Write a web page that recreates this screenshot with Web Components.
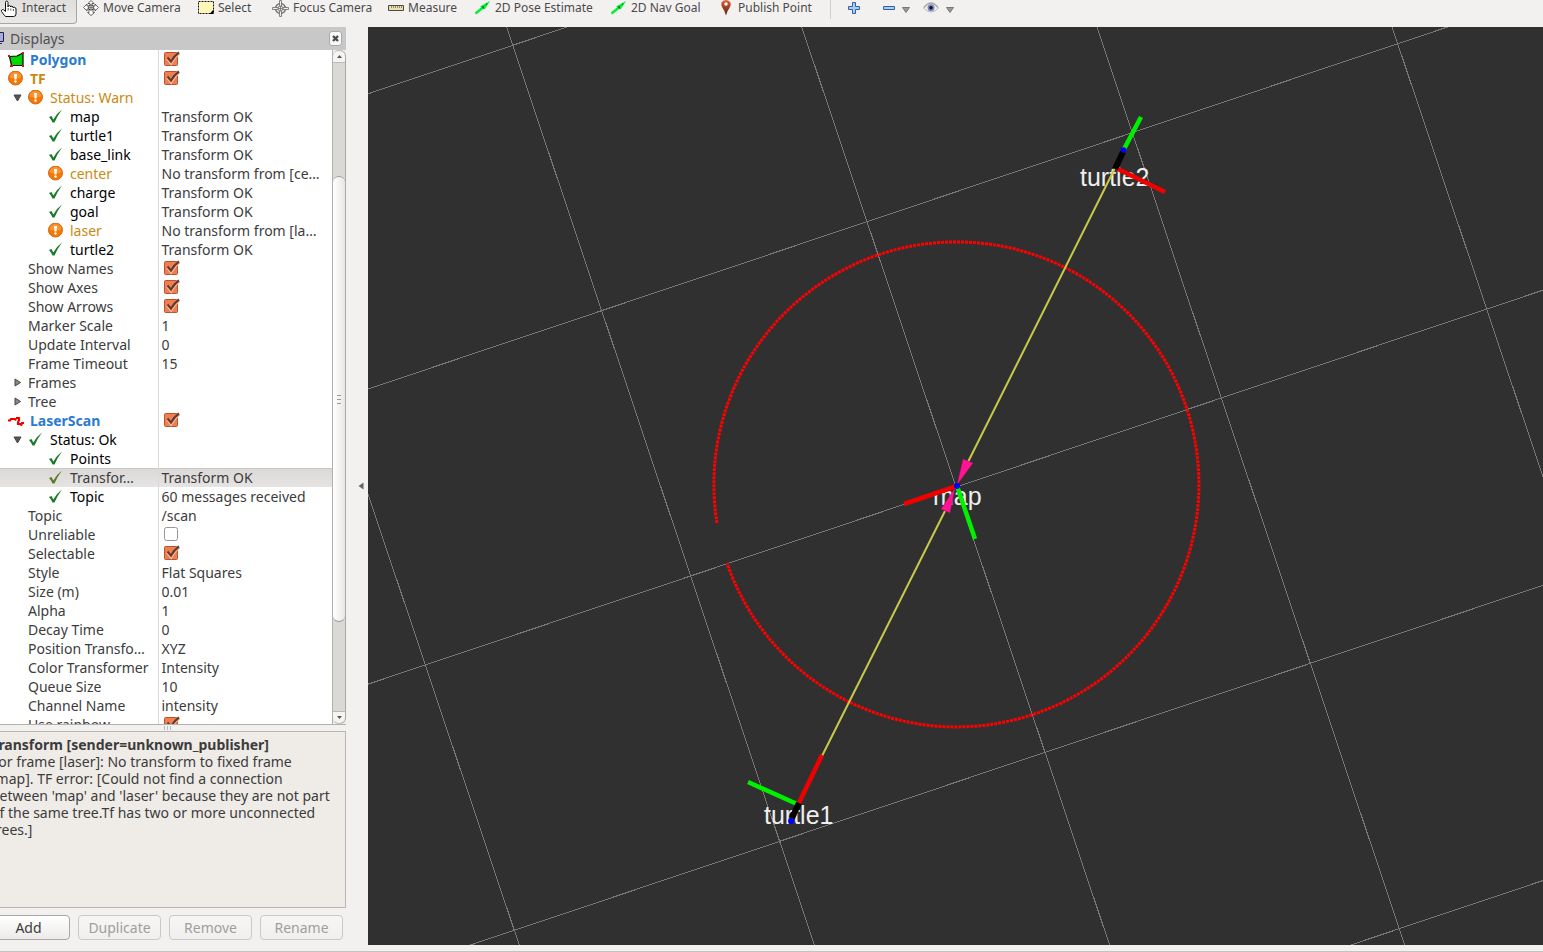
<!DOCTYPE html>
<html lang="en">
<head>
<meta charset="utf-8">
<title>RViz</title>
<style>
html,body{margin:0;height:100%;overflow:hidden;background:#f2f1f0;color:#3c3c3c;font:14px/19px "Noto Sans","Open Sans",sans-serif}
</style>
</head>
<body>
<rviz-app></rviz-app>
<script>
const define = (name, html) => customElements.define(name, class extends HTMLElement {
  connectedCallback() {
    if (this.shadowRoot) return;
    const t = document.createElement('template');
    t.innerHTML = typeof html === 'function' ? html(this) : html;
    this.attachShadow({mode: 'open'}).append(t.content.cloneNode(true));
  }
});

const svg = (w, h, body) => `<svg width="${w}" height="${h}" viewBox="0 0 ${w} ${h}" aria-hidden="true">${body}</svg>`;
const ICONS = {
  hand: svg(18, 18, '<path d="M5.500 10V3.500Q5.500 2 6.700 2T8 3.500V8Q8 6.500 9.300 6.500T10.600 8Q10.800 7 12 7.200T13.200 9Q13.500 8 14.700 8.300T16 10V15Q16 17.500 13.500 17.500H6Q5 17.500 4.500 16.500L1.500 12.500Q1 11 2.300 10.600T5.500 12.500Z" fill="#fff" stroke="#111"/><path d="M8.200 9v2.500M10.800 9.500v2M13.400 10v2" stroke="#333" stroke-width=".8"/>'),
  move: svg(16, 16, '<path d="M8 .5L11 3.500H9V6H12V4L15.500 7.500 12 11V9H10V12.500H11.500L8 15.500 4.500 12.500H6V9H4V11L.5 7.500 4 4V6H7V3.500H5Z" fill="#fff" stroke="#555" stroke-width=".9"/><circle cx="8" cy="7.500" r="2.600" fill="#ddd" stroke="#444"/><path d="M8 5v5M5.500 7.500h5" stroke="#555" stroke-width=".7"/>'),
  select: svg(16, 16, '<path d="M.5 1.500H15.500V13.500H.5Z" fill="#fff6ba" stroke="#111" stroke-dasharray="2 1"/><path d="M15.500 9.500V14H11.500Z" fill="#000"/>'),
  focus: svg(17, 17, '<g fill="#eee" stroke="#777" stroke-width=".9"><circle cx="8.500" cy="8.500" r="5" fill="none" stroke-width="1.500"/><path d="M7.500 .5H9.500V7.500H16.500V9.500H9.500V16.500H7.500V9.500H.5V7.500H7.500Z"/><circle cx="8.500" cy="8.500" r="2.500"/><path d="M8.500 6v5M6 8.500h5"/></g>'),
  measure: svg(16, 16, '<path d="M.5 5.500H15.500V10.500H.5Z" fill="#eadfae" stroke="#4e4a4a"/><path d="M3.500 6v2M5.500 6v2M7.500 6v2M9.500 6v2M11.500 6v2M13.500 6v2" stroke="#807750" stroke-width=".8"/>'),
  arrow: svg(16, 16, '<path d="M.5 13.500L8 7.500" stroke="#00f030" stroke-width="2.400"/><path d="M5 6.500L15 1 9.500 9.500Z" fill="#00f030"/><path d="M7 7h2M8 8h1M11 4h1" stroke="#064020"/>'),
  pin: svg(16, 16, '<defs><linearGradient id="p" x2="0" y2="1"><stop stop-color="#e85c38"/><stop offset="1" stop-color="#4e2410"/></linearGradient></defs><path d="M8 15.500Q7 11 4.500 8Q2.500 5 3.500 2.500Q5 0 8 0T12.500 2.500Q13.500 5 11.500 8Q9 11 8 15.500Z" fill="url(#p)"/><circle cx="8" cy="4" r="1.700" fill="#fff"/>'),
  plus: svg(12, 12, '<path d="M4.500 .5H7.500V4.500H11.500V7.500H7.500V11.500H4.500V7.500H.5V4.500H4.500Z" fill="#a9cbee" stroke="#2e63a8"/>'),
  minus: svg(12, 12, '<path d="M.5 4.500H11.500V7.500H.5Z" fill="#a9cbee" stroke="#2e63a8"/>'),
  eye: svg(16, 12, '<path d="M.5 6Q8 -3.500 15.500 6Q8 14 .5 6Z" fill="#f0f0f0" stroke="#bbb"/><path d="M1 5.500Q8 -3.500 15 5.500" fill="none" stroke="#aaa" stroke-width="1.500"/><circle cx="8" cy="5.800" r="3.500" fill="#7b88c0"/><circle cx="8" cy="5.800" r="1.700" fill="#101018"/>'),
  drop: svg(8, 10, '<path d="M.5 4.500H7.500L4 9.500Z" fill="#999" stroke="#777"/>'),
  warn: svg(16, 16, '<circle cx="7.500" cy="7" r="7" fill="#f57900" stroke="#d2691e"/><path d="M1.500 6.500Q2.500 1 7.500 1T13.500 6.500Q8 8.500 1.500 6.500Z" fill="#ffa64d" opacity=".6"/><path d="M6 3H9L8.500 8.500H6.500Z" fill="#fff"/><circle cx="7.500" cy="10.500" r="1.200" fill="#fff"/>'),
  check: svg(16, 16, '<path d="M1 8L3.500 7 5.300 10.500Q8.500 4.500 14 .5Q9.500 6.500 6.500 13.500H4.500Q3.200 10.500 1 8Z" fill="currentColor"/>'),
  polygon: svg(16, 16, '<path d="M1.500 4.500L9 4 15 1V13.500H3.500Z" fill="#00d800" stroke="#000" stroke-width="1.200"/><path d="M0 3h2v2H0zM14 0h2v2h-2zM14 13h2v2h-2zM2 13h3v2H2z" fill="#e01010"/>'),
  laser: svg(16, 16, '<path d="M0 7.500H2L3 6H7L8 7.500M8 5H11V7L10 9.500V11H13V12.500L14 10H16" fill="none" stroke="#f00000" stroke-width="2.200"/>'),
  open: svg(9, 8, '<path d="M1 1H8L4.500 7Z" fill="#555" stroke="#444"/>'),
  closed: svg(8, 9, '<path d="M1 1V8L6.500 4.500Z" fill="#888" stroke="#444"/>')
};

define('tool-button', el => `<style>
:host{display:block;min-width:0}
button{display:flex;align-items:center;gap:4px;height:32px;margin:0;padding:0;border:0;background:none;color:#4a4a4a;font:12px/16px "Noto Sans","Open Sans",sans-serif;white-space:nowrap}
svg{display:block;flex:none}
:host([menu]) button{gap:7px}
:host([active]) button{box-sizing:border-box;width:77px;border:1px solid #a7a5a2;border-left:0;border-radius:0 0 4px 0;background:linear-gradient(#dedcda,#e9e8e6)}
</style><button type="button" ${el.getAttribute('label') ? `aria-label="${el.getAttribute('label')}"` : ''}>${ICONS[el.getAttribute('icon')]}${el.hasAttribute('menu') ? ICONS.drop : ''}<slot></slot></button>`);

define('tool-bar', `<style>
:host{display:block;height:27px;overflow:hidden;background:#f2f1f0}
nav{display:grid;grid-template-columns:83px 115px 74px 116px 87px 136px 107px 112px 18px 35px 40px 40px;margin-top:-8px;align-items:start}
.sep{width:1px;height:27px;background:#d0cecc}
</style><nav aria-label="Tools">
<tool-button icon="hand" active>Interact</tool-button>
<tool-button icon="move">Move Camera</tool-button>
<tool-button icon="select">Select</tool-button>
<tool-button icon="focus">Focus Camera</tool-button>
<tool-button icon="measure">Measure</tool-button>
<tool-button icon="arrow">2D Pose Estimate</tool-button>
<tool-button icon="arrow">2D Nav Goal</tool-button>
<tool-button icon="pin">Publish Point</tool-button>
<div class="sep"></div>
<tool-button icon="plus" label="Add tool"></tool-button>
<tool-button icon="minus" label="Remove tool" menu></tool-button>
<tool-button icon="eye" label="View" menu></tool-button>
</nav>`);

// [depth, expander, icon, name, value, style]; true/false values are tick boxes
const OK = 'Transform OK';
const ROWS = [
  [0,'','polygon','Polygon',true,'display'],
  [0,'','warn','TF',true,'display warn'],
  [1,'open','warn','Status: Warn','','warn'],
  [2,'','check','map',OK,'status'],
  [2,'','check','turtle1',OK,'status'],
  [2,'','check','base_link',OK,'status'],
  [2,'','warn','center','No transform from [ce…','warn'],
  [2,'','check','charge',OK,'status'],
  [2,'','check','goal',OK,'status'],
  [2,'','warn','laser','No transform from [la…','warn'],
  [2,'','check','turtle2',OK,'status'],
  [1,'','','Show Names',true,''],
  [1,'','','Show Axes',true,''],
  [1,'','','Show Arrows',true,''],
  [1,'','','Marker Scale','1',''],
  [1,'','','Update Interval','0',''],
  [1,'','','Frame Timeout','15',''],
  [1,'closed','','Frames','',''],
  [1,'closed','','Tree','',''],
  [0,'','laser','LaserScan',true,'display'],
  [1,'open','check','Status: Ok','','status'],
  [2,'','check','Points','','status'],
  [2,'','check','Transfor…',OK,'selected'],
  [2,'','check','Topic','60 messages received','status'],
  [1,'','','Topic','/scan',''],
  [1,'','','Unreliable',false,''],
  [1,'','','Selectable',true,''],
  [1,'','','Style','Flat Squares',''],
  [1,'','','Size (m)','0.01',''],
  [1,'','','Alpha','1',''],
  [1,'','','Decay Time','0',''],
  [1,'','','Position Transfo…','XYZ',''],
  [1,'','','Color Transformer','Intensity',''],
  [1,'','','Queue Size','10',''],
  [1,'','','Channel Name','intensity',''],
  [1,'','','Use rainbow',true,'']
];
const tick = body => `url("data:image/svg+xml,${encodeURIComponent('<svg xmlns="http://www.w3.org/2000/svg" width="17" height="15">' + body + '</svg>')}")`;
const row = ([depth, exp, icon, name, value, cls], i) => {
  const cell = typeof value === 'boolean' ? `<input type="checkbox" id="c${i}" ${value ? 'checked' : ''}>` : value;
  const label = typeof value === 'boolean' ? `<label for="c${i}">${name}</label>` : `<span>${name}</span>`;
  return `<tr class="${cls}"><th scope="row"><div class="name d${depth}"><i>${exp ? ICONS[exp] : ''}</i>${icon ? `<b>${ICONS[icon]}</b>` : ''}${label}</div></th><td>${cell}</td></tr>`;
};

define('display-tree', `<style>
:host{display:flex;min-height:0;overflow:hidden;border-bottom:1px solid #b3b0ad}
.view{flex:1;min-width:0;overflow:hidden;background:#fff;border-right:1px solid #b3b0ad}
table{width:100%;border-collapse:collapse;table-layout:fixed}
col:first-child{width:158px}
tr{height:19px}
th,td{height:19px;padding:0;font-weight:400;text-align:left;white-space:nowrap;line-height:19px;overflow:hidden}
td{border-left:1px solid #d9d9d9;padding-left:3px}
.name{display:flex;align-items:center;height:19px}
i{display:flex;justify-content:flex-end;flex:none;width:8px}
.d1 i{width:22px;padding-right:6px}
.d2 i{width:48px}
b{width:16px;height:16px;flex:none;margin-right:6px}
svg{display:block}
.display{color:#2a7bd0}
.display label{font-weight:700}
.warn,.warn.display{color:#ca8a10}
.warn td{color:#3c3c3c}
.status label,.status span{color:#000}
.status b{color:#1b7a2a}
.status td,td{color:#3c3c3c}
.selected{background:linear-gradient(#dbd9d7,#e6e4e2);box-shadow:inset 0 1px #c9c7c4}
.selected b{color:#5d7a26}
input{appearance:none;display:block;width:17px;height:15px;margin:0 0 2px 1px;background:${tick('<rect x="1.500" y="1.500" width="13" height="13" rx="2" fill="#fff" stroke="#989694"/>')}}
input:checked{background:${tick('<rect x="1.500" y="1.500" width="13" height="13" rx="1" fill="#f17e50" stroke="#b75430"/><path d="M4.500 7L8 11.500Q11 5.500 16 2" fill="none" stroke="#fac0a0" stroke-width="3.500"/><path d="M4.500 6.500L8 10.500Q11 5 16 1.500" fill="none" stroke="#68382a" stroke-width="2.200"/>')}}
.bar{display:flex;flex-direction:column;width:13px;box-sizing:border-box;background:#dbd9d6;border-right:1px solid #aaa7a4;border-radius:6px}
.bar button{height:13px;padding:0;border:1px solid #bbb8b5;border-width:1px 0;background:#f6f5f4;display:grid;place-items:center}
.up{border-radius:6px 6px 0 0}.down{border-radius:0 0 6px 6px}
.gap1{flex:114}.gap2{flex:89}
.thumb{flex:446;display:grid;place-content:center;gap:3px;border:1px solid #9b9895;border-width:1px 0;border-radius:6px;background:linear-gradient(90deg,#fff,#e8e7e5)}
.thumb u{width:4px;height:1px;background:#999}
</style>
<div class="view"><table aria-label="Displays"><colgroup><col><col></colgroup><tbody>${ROWS.map(row).join('')}</tbody></table></div>
<div class="bar"><button class="up" type="button" aria-label="Scroll up">${svg(5,3,'<path d="M0 3L2.500 0 5 3Z" fill="#555"/>')}</button><div class="gap1"></div><div class="thumb"><u></u><u></u><u></u></div><div class="gap2"></div><button class="down" type="button" aria-label="Scroll down">${svg(5,3,'<path d="M0 0L2.500 3 5 0Z" fill="#555"/>')}</button></div>`);

define('help-box', `<style>
:host{display:block;box-sizing:border-box;height:177px;overflow:hidden;padding:4px 0 0;border:1px solid #b8b5b2;border-left:0;background:#efebe7;line-height:17px;white-space:nowrap}
div{margin-left:-9px}
</style><div><slot></slot></div>`);

define('panel-button', el => `<style>
:host{display:block;flex:none}
button{display:block;box-sizing:border-box;width:83px;height:25px;padding:0 0 1px;border:1px solid #aaa8a5;border-radius:4px;background:linear-gradient(#fff,#ecebe9);color:#3c3c3c;font:inherit}
button:disabled{border-color:#cbc9c7;background:linear-gradient(#f7f6f5,#f0efed);color:#a09e9c}
</style><button type="button" ${el.hasAttribute('disabled') ? 'disabled' : ''}><slot></slot></button>`);

define('display-panel', `<style>
:host{display:flex;flex-direction:column;width:346px;flex:none;min-height:0}
header{display:flex;align-items:center;gap:5px;height:23px;background:#c8c8c8;color:#505050}
h2{flex:1;margin:0;font:14px/19px "Noto Sans","Open Sans",sans-serif}
header svg{display:block}
header button{box-sizing:border-box;width:13px;height:15px;margin-right:4px;padding:0;border:1px solid #aaa;border-radius:3px;background:#f8f8f8;display:grid;place-items:center}
display-tree{flex:1}
.grip{display:flex;justify-content:center;align-items:center;gap:2px;height:6px;flex:none;padding-right:12px}
.grip u{width:1px;height:4px;background:#bbb}
footer{display:flex;gap:8px;padding:7px 0 5px;margin-left:-13px}
</style>
<header>${svg(5,17,'<path d="M0 2.500H3.500V11.500H0" fill="#a8a8e8" stroke="#202040"/><path d="M0 13.500H2" stroke="#333"/>')}<h2>Displays</h2><button type="button" aria-label="Close">${svg(7,7,'<path d="M1 1L6 6M6 1L1 6" stroke="#4a4a4a" stroke-width="2.400"/>')}</button></header>
<display-tree></display-tree>
<div class="grip"><u></u><u></u><u></u></div>
<help-box><b>Transform [sender=unknown_publisher]</b><br>For frame [laser]: No transform to fixed frame<br>[map]. TF error: [Could not find a connection<br>between 'map' and 'laser' because they are not part<br>of the same tree.Tf has two or more unconnected<br>trees.]</help-box>
<footer><panel-button>Add</panel-button><panel-button disabled>Duplicate</panel-button><panel-button disabled>Remove</panel-button><panel-button disabled>Rename</panel-button></footer>`);

// Grid lines through the map origin, one cell apart, in scene coordinates.
const grid = () => {
  let d = '';
  for (let k = -4; k <= 4; k++) {
    const ax = 588 + 88.5 * k, ay = 460 + 265.5 * k;
    const bx = 588 + 265.5 * k, by = 460 - 88.5 * k;
    d += `M${ax - 1500} ${ay + 503}L${ax + 1500} ${ay - 503}M${bx - 503} ${by - 1500}L${bx + 503} ${by + 1500}`;
  }
  return d;
};
define('scene-view', `<style>
:host{display:block;flex:1;min-width:0;background:#303030;overflow:hidden}
svg{display:block;width:100%;height:100%}
text{font:25px "Liberation Sans",sans-serif;fill:#eee}
</style>
<svg viewBox="0 0 1175 918" preserveAspectRatio="xMidYMid slice" role="img" aria-label="3D view">
<path d="${grid()}" stroke="#777" stroke-width="1" shape-rendering="crispEdges" fill="none"/>
<path d="M349 496A242.500 242.500 0 1 1 359 536" fill="none" stroke="#f00" stroke-width="3" stroke-dasharray="3 1"/>
<text x="712" y="159">turtle2</text><text x="565" y="478">map</text><text x="396" y="797">turtle1</text>
<path d="M747 141L600 435M577 484L454 729" stroke="#c8c84a" stroke-width="2"/>
<path d="M595 432L605 436 589 458ZM573 482L582 486 587 461Z" fill="#ff1493" stroke="#a01060" stroke-width=".5"/>
<g fill="none" stroke-width="4.500">
<path d="M755 124L773 90" stroke="#00f000"/><path d="M748 141L797 165" stroke="#f00000"/><path d="M747 142L755 125" stroke="#000" stroke-width="6"/>
<path d="M589 459L536 477" stroke="#f00000"/><path d="M589 459L607 512" stroke="#00f000"/>
<path d="M429 777L380 755" stroke="#00f000"/><path d="M430 778L454 728" stroke="#f00000"/><path d="M431 776L424 791" stroke="#000" stroke-width="6"/></g>
<g fill="#00f"><circle cx="755.500" cy="123" r="2.800"/><circle cx="589" cy="459" r="3"/><circle cx="423" cy="794" r="2.900"/></g>
</svg>`);

define('rviz-app', `<style>
:host{display:flex;flex-direction:column;height:100vh}
tool-bar{flex:none}
main{display:flex;flex:1;min-height:0}
.split{width:22px;flex:none;display:grid;place-items:center;padding:0 0 0 7px;box-sizing:border-box;border:0;background:none}
footer{height:6px;flex:none;border-bottom:1px solid #c4c2c0}
</style><tool-bar></tool-bar><main><display-panel></display-panel><button class="split" type="button" aria-label="Hide panel">${svg(6,8,'<path d="M5.500 .5V7.500L.5 4Z" fill="#666"/>')}</button><scene-view></scene-view></main><footer></footer>`);
</script>
</body>
</html>
